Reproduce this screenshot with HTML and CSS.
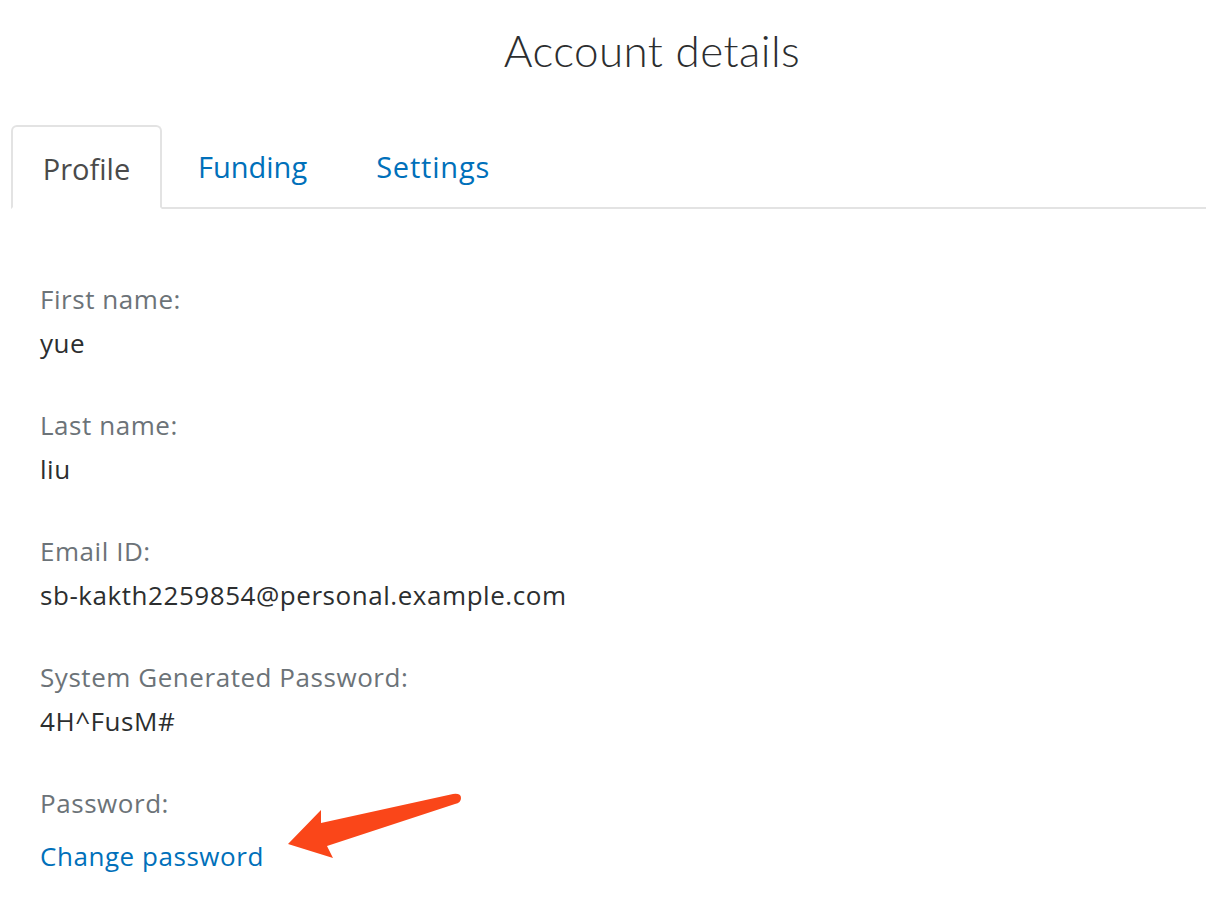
FILE: index.html
```html
<!DOCTYPE html>
<html>
<head>
<meta charset="utf-8">
<link rel="stylesheet" href="styles.css">
</head>
<body>
<div class="page">
  <h1 class="title">Account details</h1>
  <div class="tabs">
    <div class="tab active">Profile</div>
    <div class="tab">Funding</div>
    <div class="tab settings">Settings</div>
    <div class="tab-fill"></div>
  </div>
  <div class="fields">
    <div class="field">
      <div class="label">First name:</div>
      <div class="value">yue</div>
    </div>
    <div class="field">
      <div class="label">Last name:</div>
      <div class="value">liu</div>
    </div>
    <div class="field">
      <div class="label">Email ID:</div>
      <div class="value">sb-kakth2259854@personal.example.com</div>
    </div>
    <div class="field">
      <div class="label">System Generated Password:</div>
      <div class="value">4H^FusM#</div>
    </div>
    <div class="field last">
      <div class="label">Password:</div>
      <a class="link" href="#">Change password</a>
    </div>
  </div>
  <svg class="arrow" width="1206" height="898" viewBox="0 0 1206 898">
    <path d="M288 844 L321 810 L321 823 L453 794 Q461 793 461 798 Q461 803 455 804 L327 846 L333 858 Z" fill="#fa4619"/>
  </svg>
</div>
</body>
</html>
```
FILE: styles.css
```css
html, body {
  margin: 0;
  padding: 0;
  background: #fff;
}
.page {
  position: relative;
  width: 1206px;
  height: 898px;
  overflow: hidden;
  font-family: "Open Sans", Lato, sans-serif;
}
.title {
  margin: 0;
  padding: 25px 0 0 98px;
  text-align: center;
  font-family: Lato, "Open Sans", sans-serif;
  font-weight: 300;
  font-size: 44px;
  line-height: 50px;
  color: #2c2e2f;
  letter-spacing: 0.4px;
}
.tabs {
  display: flex;
  margin-top: 50px;
  padding-left: 11px;
  height: 84px;
}
.tab {
  font-size: 29px;
  color: #0070ba;
  padding: 0 31px 0 36px;
  display: flex;
  align-items: center;
  border-bottom: 2px solid #e3e3e3;
  box-sizing: border-box;
}
.tab.settings {
  padding-left: 38px;
  padding-right: 0;
  letter-spacing: 0.8px;
}
.tab.active {
  color: #4a4a4a;
  border: 2px solid #e3e3e3;
  border-bottom: 2px solid #fff;
  border-radius: 6px 6px 0 0;
  padding: 2px 0 0 0;
  width: 151px;
  justify-content: center;
}
.tab-fill {
  flex: 1;
  border-bottom: 2px solid #e3e3e3;
}
.fields {
  padding: 68px 0 0 40px;
}
.field {
  display: flex;
  flex-direction: column;
  margin-bottom: 38px;
}
.label,
.value,
.link {
  font-size: 26px;
  line-height: 44px;
  letter-spacing: 0.55px;
}
.label {
  color: #6c7378;
}
.value {
  color: #2c2e2f;
}
.link {
  margin-top: 9px;
  color: #0070ba;
  text-decoration: none;
}
.arrow {
  position: absolute;
  left: 0;
  top: 0;
  pointer-events: none;
}
```
